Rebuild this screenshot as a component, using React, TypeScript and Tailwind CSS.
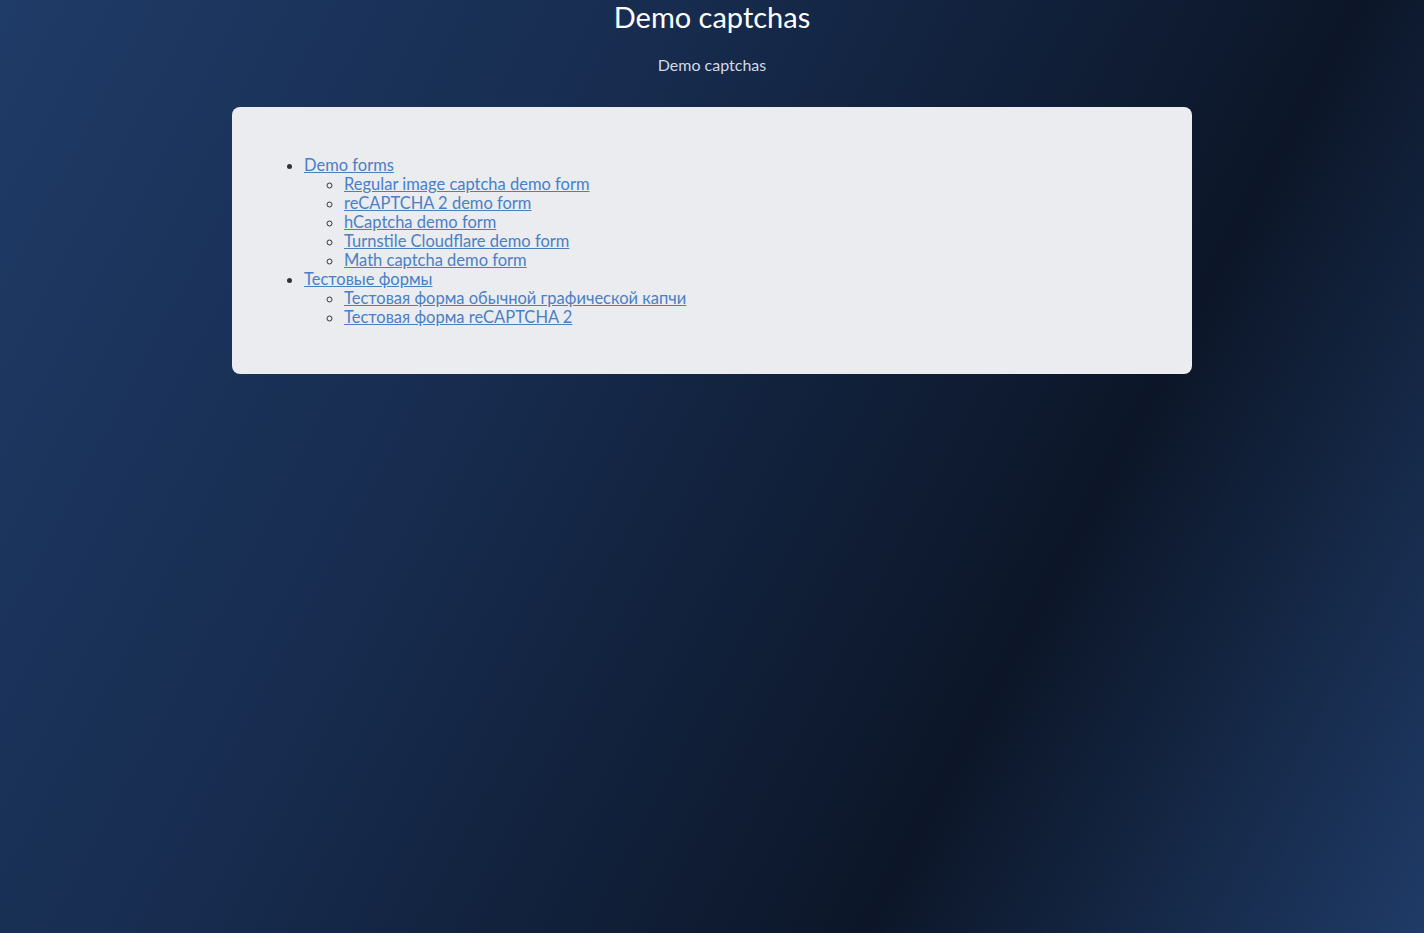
import React from "react";

const demoLinks = [
  "Regular image captcha demo form",
  "reCAPTCHA 2 demo form",
  "hCaptcha demo form",
  "Turnstile Cloudflare demo form",
  "Math captcha demo form",
];

const ruLinks = [
  "Тестовая форма обычной графической капчи",
  "Тестовая форма reCAPTCHA 2",
];

export default function App() {
  return (
    <div
      className="min-h-screen bg-[linear-gradient(118deg,#1f3b67_0%,#172c4f_35%,#0c1628_71%,#1f3b67_100%)] pb-10 text-center"
      style={{ fontFamily: "Lato, 'Noto Sans', sans-serif" }}
    >
      <h1 className="m-0 text-[29px] font-normal leading-[33px] text-white">
        Demo captchas
      </h1>
      <p className="mt-[22px] text-[16px] leading-[19px] text-[#d3d9e3]">
        Demo captchas
      </p>
      <div className="mx-auto mt-[33px] w-[960px] rounded-lg bg-[#eaecf0] p-8 text-left text-[16.5px] leading-[19px] text-[#333]">
        <ul className="mt-[17px] mb-[15px] list-disc pl-10">
          <li>
            <a href="#" className="text-[#4a7fc4] underline">
              Demo forms
            </a>
            <ul className="list-[circle] pl-10">
              {demoLinks.map((l) => (
                <li key={l}>
                  <a href="#" className="text-[#4a7fc4] underline">
                    {l}
                  </a>
                </li>
              ))}
            </ul>
          </li>
          <li>
            <a href="#" className="text-[#4a7fc4] underline">
              Тестовые формы
            </a>
            <ul className="list-[circle] pl-10">
              {ruLinks.map((l) => (
                <li key={l}>
                  <a href="#" className="text-[#4a7fc4] underline">
                    {l}
                  </a>
                </li>
              ))}
            </ul>
          </li>
        </ul>
      </div>
    </div>
  );
}
